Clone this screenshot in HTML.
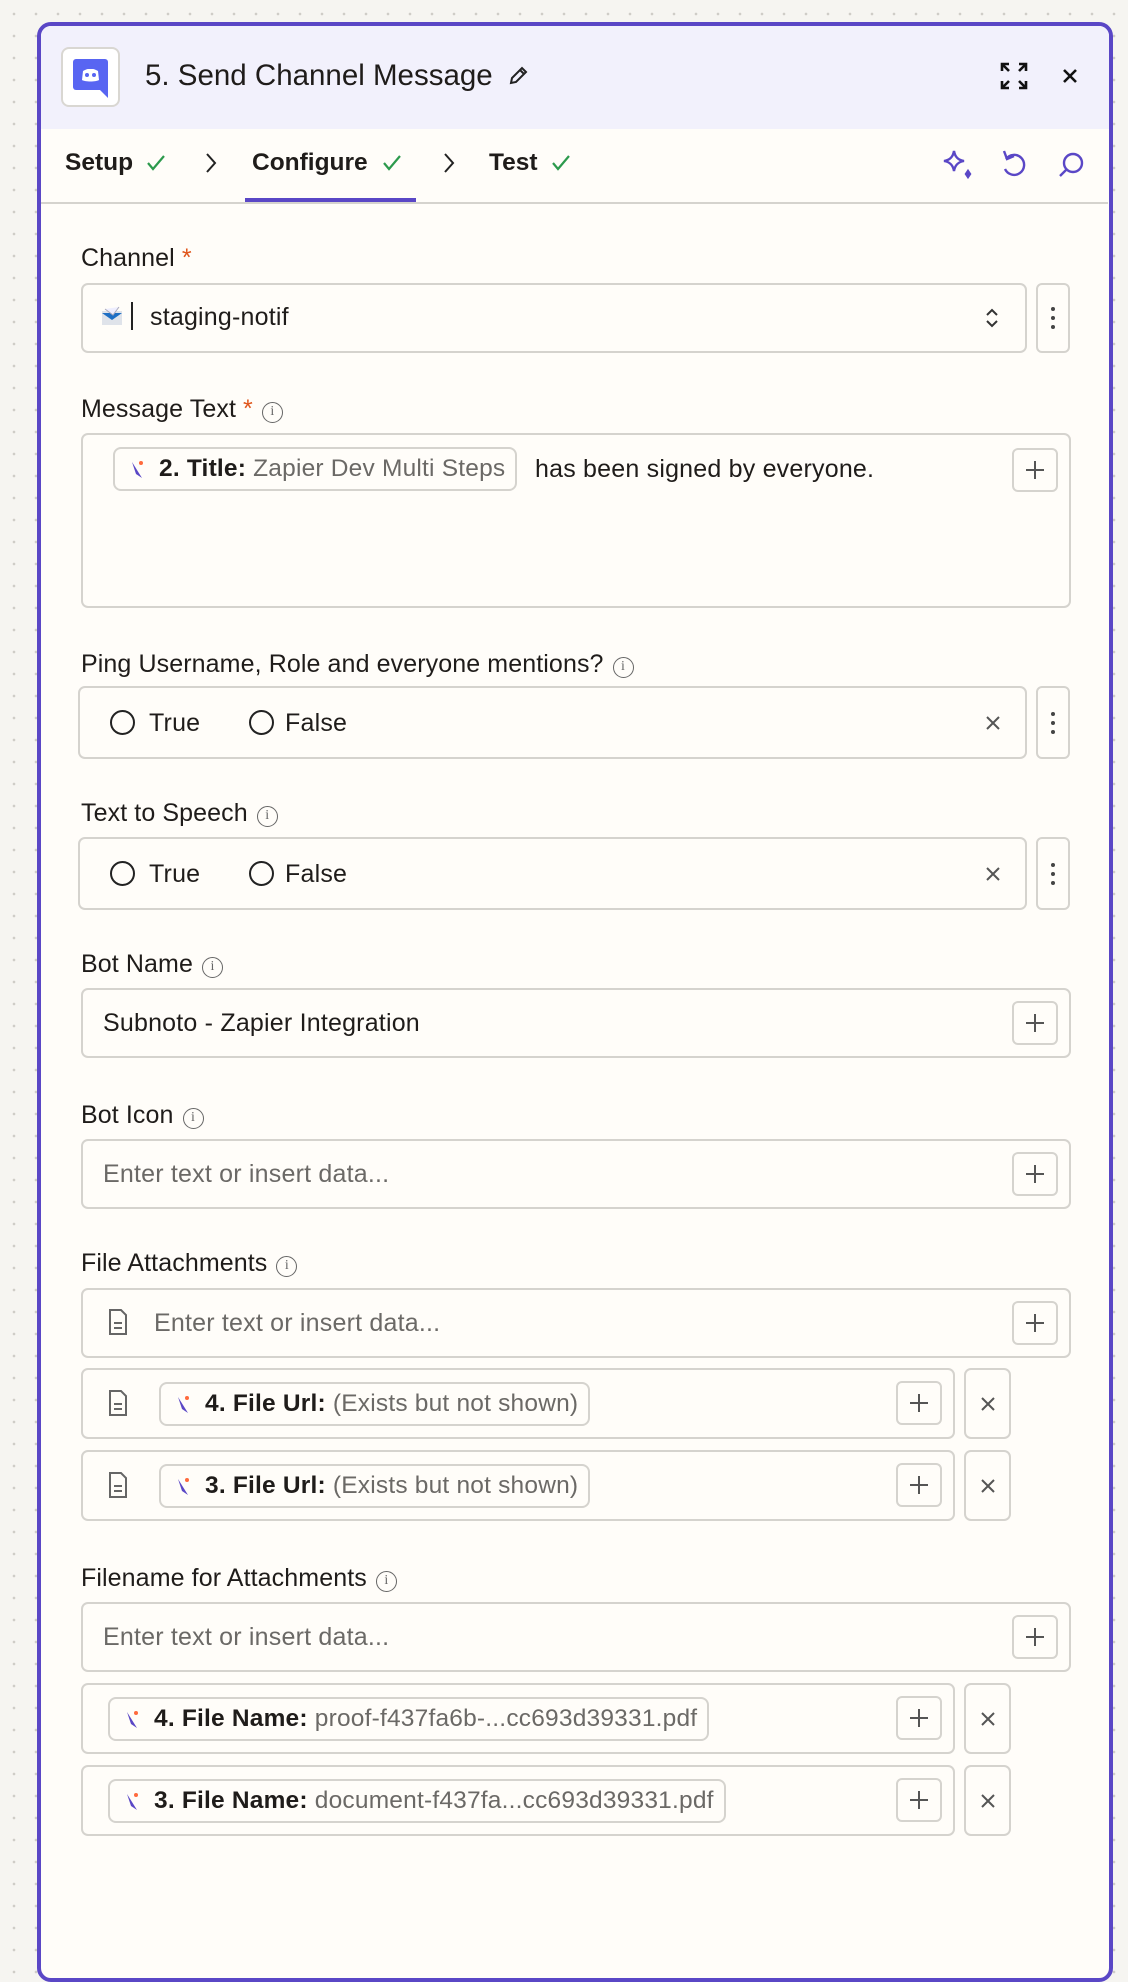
<!DOCTYPE html>
<html><head><meta charset="utf-8">
<style>
*{box-sizing:border-box;margin:0;padding:0}
body{width:1128px;height:1918px;overflow:hidden;position:relative;font-family:"Liberation Sans",sans-serif;color:#1f1c1a;
background-color:#f6f5f1;background-image:radial-gradient(circle,#cfcdc7 1.2px,transparent 1.5px);background-size:22px 22px;background-position:3px 3px}
.panel{position:absolute;left:37px;top:22px;width:1076px;height:1960px;border:4px solid #5a47c6;border-radius:14px;background:#fffdf9;overflow:hidden}
.hdr{position:absolute;left:0;top:0;right:0;height:103px;background:#f2f1fc}
.abs{position:absolute}
.lbl{position:absolute;left:81px;font-size:25px;color:#1f1c1a;line-height:28px;letter-spacing:0.1px}
.req{color:#e0561c}
.info{display:inline-block;width:21px;height:21px;border:1.6px solid #666;border-radius:50%;font-size:14px;line-height:18px;text-align:center;color:#666;vertical-align:2px;margin-left:9px;font-family:"Liberation Serif",serif}
.box{position:absolute;border:2px solid #d5d3ce;border-radius:7px;background:#fffdf9}
.txt{position:absolute;font-size:25px;line-height:28px;letter-spacing:0.2px}
.ph{color:#6b6966}
.plus{position:absolute;width:46px;height:44px;border:2px solid #d5d3ce;border-radius:6px;background:#fffdf9}
.plus:before,.plus:after{content:"";position:absolute;background:#555;left:50%;top:50%}
.plus:before{width:18px;height:2px;margin:-1px 0 0 -9px}
.plus:after{width:2px;height:18px;margin:-9px 0 0 -1px}
.chip{position:absolute;height:44px;border:2px solid #d5d3ce;border-radius:8px;background:#fffdf9;font-size:24.5px;line-height:40px;padding:0 10px 0 44px;white-space:nowrap;letter-spacing:0.2px}
.chip b{font-weight:bold;color:#1f1c1a}
.chip span{color:#6b6966}
.chip svg{position:absolute;left:14px;top:10px}
.radio{position:absolute;width:25px;height:25px;border:2px solid #222;border-radius:50%}
.keb{position:absolute;width:34px;border:2px solid #d5d3ce;border-radius:6px}
.keb i{position:absolute;left:13px;width:4px;height:4px;border-radius:50%;background:#444}
</style></head><body>
<div class="panel">
<div class="hdr"></div>
</div>
<div class="abs" style="left:61px;top:47px;width:59px;height:60px;border:2px solid #d9d7d2;border-radius:8px;background:#fff">
<svg width="55" height="56" viewBox="0 0 55 56"><rect x="10" y="10" width="35" height="31" rx="3" fill="#5865f2"/><path d="M36 40 L45 49 L45 38Z" fill="#5865f2"/><path d="M19 31c3 2 14 2 17 0l-1-9c-2-1-4-2-5-2h-5c-1 0-3 1-5 2z" fill="#fff"/><circle cx="24" cy="26" r="2" fill="#5865f2"/><circle cx="31" cy="26" r="2" fill="#5865f2"/></svg>
</div>
<div class="txt" style="left:145px;top:59px;font-size:29.5px;line-height:34px;color:#1f1c1a;letter-spacing:0">5. Send Channel Message</div>
<svg class="abs" style="left:507px;top:65px" width="22" height="22" viewBox="0 0 22 22"><path d="M4 18l1-5L15 3l4 4L9 17z M13 5l4 4" fill="none" stroke="#222" stroke-width="2"/></svg>
<svg class="abs" style="left:1000px;top:62px" width="28" height="28" viewBox="0 0 28 28" fill="none" stroke="#111" stroke-width="2.6"><path d="M2 9V2h7M2 2l7 7M26 9V2h-7M26 2l-7 7M2 19v7h7M2 26l7-7M26 19v7h-7M26 26l-7-7"/></svg>
<svg class="abs" style="left:1062px;top:68px" width="16" height="16" viewBox="0 0 16 16" stroke="#111" stroke-width="2.6"><path d="M2 2l12 12M14 2L2 14"/></svg>
<div class="txt" style="left:65px;top:149px;font-weight:bold;font-size:24.5px;letter-spacing:0">Setup</div>
<svg class="abs" style="left:146px;top:154px" width="20" height="18" viewBox="0 0 20 18" fill="none" stroke="#2c9a4d" stroke-width="2.2"><path d="M2 9l5 6L18 2"/></svg>
<svg class="abs" style="left:205px;top:152px" width="12" height="22" viewBox="0 0 12 22" fill="none" stroke="#222" stroke-width="2"><path d="M2 2l8 9-8 9"/></svg>
<div class="txt" style="left:252px;top:149px;font-weight:bold;font-size:24.5px;letter-spacing:0">Configure</div>
<svg class="abs" style="left:382px;top:154px" width="20" height="18" viewBox="0 0 20 18" fill="none" stroke="#2c9a4d" stroke-width="2.2"><path d="M2 9l5 6L18 2"/></svg>
<div class="abs" style="left:245px;top:198px;width:171px;height:4px;background:#5a47c6"></div>
<div class="abs" style="left:41px;top:202px;width:1067px;height:2px;background:#d5d3ce"></div>
<svg class="abs" style="left:443px;top:152px" width="12" height="22" viewBox="0 0 12 22" fill="none" stroke="#222" stroke-width="2"><path d="M2 2l8 9-8 9"/></svg>
<div class="txt" style="left:489px;top:149px;font-weight:bold;font-size:24.5px;letter-spacing:0">Test</div>
<svg class="abs" style="left:551px;top:154px" width="20" height="18" viewBox="0 0 20 18" fill="none" stroke="#2c9a4d" stroke-width="2.2"><path d="M2 9l5 6L18 2"/></svg>
<svg class="abs" style="left:942px;top:149px" width="32" height="32" viewBox="0 0 32 32" fill="none" stroke="#5a47c6" stroke-width="2.4"><path d="M12 2c1 6 4 9 10 10-6 1-9 4-10 10-1-6-4-9-10-10 6-1 9-4 10-10z"/><path d="M26 22l2 3-2 3-2-3z" fill="#5a47c6"/></svg>
<svg class="abs" style="left:1000px;top:149px" width="28" height="30" viewBox="0 0 28 30" fill="none" stroke="#5a47c6" stroke-width="2.4"><path d="M6 10a10 10 0 1 1-1 10"/><path d="M4 2l3 8 7-3"/></svg>
<svg class="abs" style="left:1056px;top:151px" width="30" height="30" viewBox="0 0 30 30" fill="none" stroke="#5a47c6" stroke-width="2.4"><circle cx="17" cy="12" r="9"/><path d="M10 19l-6 6"/></svg>

<div class="lbl" style="top:244px">Channel <span class="req">*</span></div>
<div class="box" style="left:81px;top:283px;width:946px;height:70px"></div>
<svg class="abs" style="left:101px;top:305px" width="22" height="22" viewBox="0 0 22 22"><rect x="1" y="6" width="20" height="14" fill="#dfe3ea"/><path d="M1 8l10 7 10-7" fill="#1e6fc4"/><path d="M4 4l8 6 6-8" fill="#eef" stroke="#aab" stroke-width="1"/></svg>
<div class="abs" style="left:131px;top:302px;width:2px;height:28px;background:#222"></div>
<div class="txt" style="left:150px;top:303px">staging-notif</div>
<svg class="abs" style="left:985px;top:307px" width="14" height="22" viewBox="0 0 14 22" fill="none" stroke="#333" stroke-width="2"><path d="M2 8l5-5 5 5M2 14l5 5 5-5"/></svg>
<div class="keb" style="left:1036px;top:283px;height:70px"><i style="top:22px"></i><i style="top:31px"></i><i style="top:40px"></i></div>

<div class="lbl" style="top:395px">Message Text <span class="req">*</span><span class="info">i</span></div>
<div class="box" style="left:81px;top:433px;width:990px;height:175px"></div>
<div class="chip" style="left:113px;top:447px"><svg width="18" height="22" viewBox="0 0 18 22"><path d="M3 3l10 16-6-4z" fill="#5a47c6"/><circle cx="12" cy="4" r="2" fill="#ff6a3d"/></svg><b>2. Title:</b> <span>Zapier Dev Multi Steps</span></div>
<div class="txt" style="left:535px;top:455px">has been signed by everyone.</div>
<div class="plus" style="left:1012px;top:448px"></div>

<div class="lbl" style="top:650px">Ping Username, Role and everyone mentions?<span class="info">i</span></div>
<div class="box" style="left:78px;top:686px;width:949px;height:73px"></div>
<div class="radio" style="left:110px;top:710px"></div><div class="txt" style="left:149px;top:709px">True</div>
<div class="radio" style="left:249px;top:710px"></div><div class="txt" style="left:285px;top:709px">False</div>
<svg class="abs" style="left:985px;top:715px" width="16" height="16" viewBox="0 0 16 16" stroke="#555" stroke-width="2"><path d="M2 2l12 12M14 2L2 14"/></svg>
<div class="keb" style="left:1036px;top:686px;height:73px"><i style="top:24px"></i><i style="top:33px"></i><i style="top:42px"></i></div>

<div class="lbl" style="top:799px">Text to Speech<span class="info">i</span></div>
<div class="box" style="left:78px;top:837px;width:949px;height:73px"></div>
<div class="radio" style="left:110px;top:861px"></div><div class="txt" style="left:149px;top:860px">True</div>
<div class="radio" style="left:249px;top:861px"></div><div class="txt" style="left:285px;top:860px">False</div>
<svg class="abs" style="left:985px;top:866px" width="16" height="16" viewBox="0 0 16 16" stroke="#555" stroke-width="2"><path d="M2 2l12 12M14 2L2 14"/></svg>
<div class="keb" style="left:1036px;top:837px;height:73px"><i style="top:24px"></i><i style="top:33px"></i><i style="top:42px"></i></div>

<div class="lbl" style="top:950px">Bot Name<span class="info">i</span></div>
<div class="box" style="left:81px;top:988px;width:990px;height:70px"></div>
<div class="txt" style="left:103px;top:1009px">Subnoto - Zapier Integration</div>
<div class="plus" style="left:1012px;top:1001px"></div>

<div class="lbl" style="top:1101px">Bot Icon<span class="info">i</span></div>
<div class="box" style="left:81px;top:1139px;width:990px;height:70px"></div>
<div class="txt ph" style="left:103px;top:1160px">Enter text or insert data...</div>
<div class="plus" style="left:1012px;top:1152px"></div>

<div class="lbl" style="top:1249px">File Attachments<span class="info">i</span></div>
<div class="box" style="left:81px;top:1288px;width:990px;height:70px"></div>
<svg class="abs" style="left:109px;top:1309px" width="18" height="26" viewBox="0 0 18 26" fill="none" stroke="#666" stroke-width="2"><path d="M1 1h11l5 5v19H1z M5 14h8M5 19h8"/></svg>
<div class="txt ph" style="left:154px;top:1309px">Enter text or insert data...</div>
<div class="plus" style="left:1012px;top:1301px"></div>

<div class="box" style="left:81px;top:1368px;width:874px;height:71px"></div>
<svg class="abs" style="left:109px;top:1390px" width="18" height="26" viewBox="0 0 18 26" fill="none" stroke="#666" stroke-width="2"><path d="M1 1h11l5 5v19H1z M5 14h8M5 19h8"/></svg>
<div class="chip" style="left:159px;top:1382px"><svg width="18" height="22" viewBox="0 0 18 22"><path d="M3 3l10 16-6-4z" fill="#5a47c6"/><circle cx="12" cy="4" r="2" fill="#ff6a3d"/></svg><b>4. File Url:</b> <span>(Exists but not shown)</span></div>
<div class="plus" style="left:896px;top:1381px"></div>
<div class="box" style="left:964px;top:1368px;width:47px;height:71px"></div>
<svg class="abs" style="left:980px;top:1396px" width="16" height="16" viewBox="0 0 16 16" stroke="#555" stroke-width="2"><path d="M2 2l12 12M14 2L2 14"/></svg>

<div class="box" style="left:81px;top:1450px;width:874px;height:71px"></div>
<svg class="abs" style="left:109px;top:1472px" width="18" height="26" viewBox="0 0 18 26" fill="none" stroke="#666" stroke-width="2"><path d="M1 1h11l5 5v19H1z M5 14h8M5 19h8"/></svg>
<div class="chip" style="left:159px;top:1464px"><svg width="18" height="22" viewBox="0 0 18 22"><path d="M3 3l10 16-6-4z" fill="#5a47c6"/><circle cx="12" cy="4" r="2" fill="#ff6a3d"/></svg><b>3. File Url:</b> <span>(Exists but not shown)</span></div>
<div class="plus" style="left:896px;top:1463px"></div>
<div class="box" style="left:964px;top:1450px;width:47px;height:71px"></div>
<svg class="abs" style="left:980px;top:1478px" width="16" height="16" viewBox="0 0 16 16" stroke="#555" stroke-width="2"><path d="M2 2l12 12M14 2L2 14"/></svg>

<div class="lbl" style="top:1564px">Filename for Attachments<span class="info">i</span></div>
<div class="box" style="left:81px;top:1602px;width:990px;height:70px"></div>
<div class="txt ph" style="left:103px;top:1623px">Enter text or insert data...</div>
<div class="plus" style="left:1012px;top:1615px"></div>

<div class="box" style="left:81px;top:1683px;width:874px;height:71px"></div>
<div class="chip" style="left:108px;top:1697px"><svg width="18" height="22" viewBox="0 0 18 22"><path d="M3 3l10 16-6-4z" fill="#5a47c6"/><circle cx="12" cy="4" r="2" fill="#ff6a3d"/></svg><b>4. File Name:</b> <span>proof-f437fa6b-...cc693d39331.pdf</span></div>
<div class="plus" style="left:896px;top:1696px"></div>
<div class="box" style="left:964px;top:1683px;width:47px;height:71px"></div>
<svg class="abs" style="left:980px;top:1711px" width="16" height="16" viewBox="0 0 16 16" stroke="#555" stroke-width="2"><path d="M2 2l12 12M14 2L2 14"/></svg>

<div class="box" style="left:81px;top:1765px;width:874px;height:71px"></div>
<div class="chip" style="left:108px;top:1779px"><svg width="18" height="22" viewBox="0 0 18 22"><path d="M3 3l10 16-6-4z" fill="#5a47c6"/><circle cx="12" cy="4" r="2" fill="#ff6a3d"/></svg><b>3. File Name:</b> <span>document-f437fa...cc693d39331.pdf</span></div>
<div class="plus" style="left:896px;top:1778px"></div>
<div class="box" style="left:964px;top:1765px;width:47px;height:71px"></div>
<svg class="abs" style="left:980px;top:1793px" width="16" height="16" viewBox="0 0 16 16" stroke="#555" stroke-width="2"><path d="M2 2l12 12M14 2L2 14"/></svg>
</body></html>
